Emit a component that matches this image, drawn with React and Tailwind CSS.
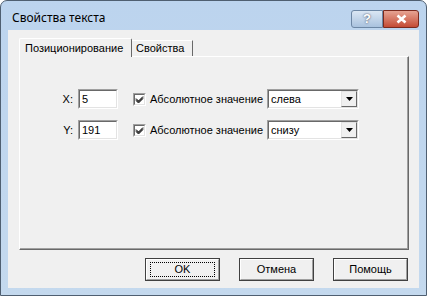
import React from "react";

const font = { fontFamily: "'Liberation Sans', Arial, sans-serif" };

function Checkbox() {
  return (
    <div className="w-[13px] h-[13px] border-t border-l border-t-[#a0a0a0] border-l-[#a0a0a0] border-r border-b border-r-white border-b-white">
      <div className="w-[11px] h-[11px] border-t border-l border-t-[#696969] border-l-[#696969] border-r border-b border-r-[#e3e3e3] border-b-[#e3e3e3] bg-white flex items-center justify-center">
        <svg width="9" height="9" viewBox="0 0 9 9">
          <path d="M1 3.5 L3.5 6 L8 1.5 M1 4.5 L3.5 7 L8 2.5 M1 5.5 L3.5 8 L8 3.5" stroke="#000" strokeWidth="1" fill="none" />
        </svg>
      </div>
    </div>
  );
}

function Sunken({ className, children }) {
  return (
    <div className={"border-t border-l border-t-[#a0a0a0] border-l-[#a0a0a0] border-r border-b border-r-white border-b-white " + className}>
      <div className="w-full h-full border-t border-l border-t-[#696969] border-l-[#696969] border-r border-b border-r-[#e3e3e3] border-b-[#e3e3e3] bg-white flex items-center">
        {children}
      </div>
    </div>
  );
}

function Select({ value }) {
  return (
    <Sunken className="w-[92px] h-[20px]">
      <span className="flex-1 pl-[2px] text-[11px] leading-none">{value}</span>
      <div className="w-[16px] h-[16px] bg-[#f0f0f0] border-t border-l border-t-[#e3e3e3] border-l-[#e3e3e3] border-r border-b border-r-[#696969] border-b-[#696969] flex items-center justify-center">
        <svg width="7" height="4" viewBox="0 0 7 4"><path d="M0 0H7L3.5 4Z" fill="#000" /></svg>
      </div>
    </Sunken>
  );
}

function Row({ label, value, sel }) {
  return (
    <div className="flex items-center h-[20px]">
      <span className="w-[58px] text-right pr-[5px] text-[11px]">{label}</span>
      <Sunken className="w-[40px] h-[20px]">
        <span className="pl-[2px] text-[11px]">{value}</span>
      </Sunken>
      <div className="ml-[15px]"><Checkbox /></div>
      <span className="ml-[4px] text-[11px] w-[117px] whitespace-nowrap">Абсолютное значение</span>
      <Select value={sel} />
    </div>
  );
}

function Button({ children, focused }) {
  return (
    <div className="w-[75px] h-[23px] border border-[#404040]">
      <div className="w-full h-full border-t border-l border-t-white border-l-white border-r border-b border-r-[#a0a0a0] border-b-[#a0a0a0] bg-[#f0f0f0] flex items-center justify-center text-[11px]">
        {focused ? (
          <span className="border border-dotted border-[#000] w-[65px] h-[15px] flex items-center justify-center">{children}</span>
        ) : children}
      </div>
    </div>
  );
}

export default function App() {
  return (
    <div className="w-[427px] h-[296px] bg-white" style={font}>
      <div className="w-full h-full border border-[#4f5f71] rounded-t-[7px] bg-gradient-to-b from-[#bcd4ee] to-[#c4d9ee] flex flex-col">
        <div className="h-[29px] flex pl-[11px] pr-[7px]">
          <span className="mt-[9px] text-[12px] text-black leading-[16px]" style={{ fontFamily: "'Noto Sans', 'DejaVu Sans', sans-serif" }}>Свойства текста</span>
          <div className="ml-auto flex mt-[9px] h-[18px]">
            <div className="w-[32px] h-[18px] rounded-l-[3px] border border-[#6d87a5] bg-gradient-to-b from-[#dbe7f4] to-[#a9c2de] flex items-center justify-center text-white text-[13px] font-bold" style={{ textShadow: "0 0 2px #334" }}>?</div>
            <div className="w-[36px] h-[18px] rounded-r-[3px] border border-[#7a2a1e] bg-gradient-to-b from-[#e6a393] to-[#c34a34] flex items-center justify-center">
              <svg width="13" height="10" viewBox="0 0 13 10"><path d="M2.5 1.5L10.5 8.5M10.5 1.5L2.5 8.5" stroke="#fff" strokeWidth="2.6" /></svg>
            </div>
          </div>
        </div>
        <div className="mx-[7px] h-[258px] bg-[#f0f0f0] flex flex-col pl-[11px] pr-[10px] pt-[8px]">
          <div className="flex items-end h-[18px]">
            <div className="h-[19px] w-[113px] border-t border-l border-white border-r border-r-[#696969] bg-[#f0f0f0] flex items-center pl-[5px] text-[11px] rounded-t-[2px] z-10 -mb-[1px] whitespace-nowrap">Позиционирование</div>
            <div className="h-[16px] w-[61px] border-t border-white border-r border-r-[#696969] bg-[#f0f0f0] flex items-center pl-[4px] text-[11px] whitespace-nowrap">Свойства</div>
          </div>
          <div className="h-[194px] border-t border-l border-white border-r border-b border-r-[#696969] border-b-[#696969]">
            <div className="h-full border-r border-b border-r-[#a0a0a0] border-b-[#a0a0a0] flex flex-col pt-[32px] gap-[11px]">
              <Row label="X:" value="5" sel="слева" />
              <Row label="Y:" value="191" sel="снизу" />
            </div>
          </div>
          <div className="flex justify-end gap-[19px] mt-[8px] pr-[1px]">
            <Button focused>OK</Button>
            <Button>Отмена</Button>
            <Button>Помощь</Button>
          </div>
        </div>
      </div>
    </div>
  );
}
